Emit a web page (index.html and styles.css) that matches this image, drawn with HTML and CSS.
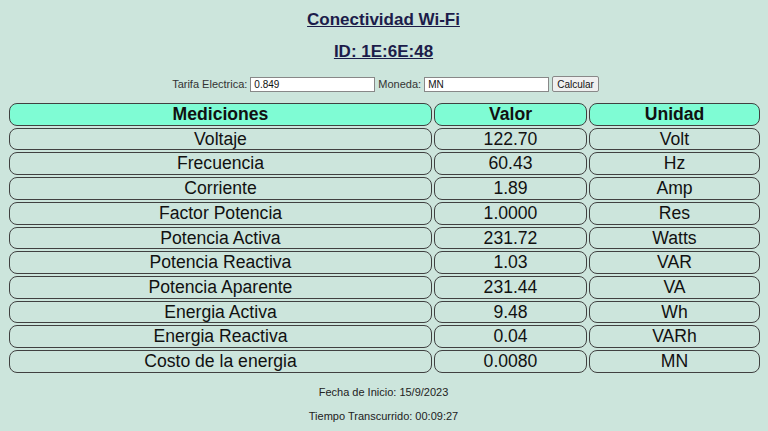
FILE: index.html
```html
<!DOCTYPE html>
<html lang="es">
<head>
<meta charset="utf-8">
<title>Conectividad Wi-Fi</title>
<link rel="stylesheet" href="styles.css">
</head>
<body>
<h1 class="title">Conectividad Wi-Fi</h1>
<h2 class="title">ID: 1E:6E:48</h2>
<div class="form">
  <label>Tarifa Electrica: <input class="field" type="text" value="0.849"></label>
  <label>Moneda: <input class="field" type="text" value="MN"></label>
  <button class="btn">Calcular</button>
</div>
<table class="data">
  <colgroup><col class="c1"><col class="c2"><col class="c3"></colgroup>
  <thead>
    <tr><th>Mediciones</th><th>Valor</th><th>Unidad</th></tr>
  </thead>
  <tbody>
    <tr><td>Voltaje</td><td>122.70</td><td>Volt</td></tr>
    <tr><td>Frecuencia</td><td>60.43</td><td>Hz</td></tr>
    <tr><td>Corriente</td><td>1.89</td><td>Amp</td></tr>
    <tr><td>Factor Potencia</td><td>1.0000</td><td>Res</td></tr>
    <tr><td>Potencia Activa</td><td>231.72</td><td>Watts</td></tr>
    <tr><td>Potencia Reactiva</td><td>1.03</td><td>VAR</td></tr>
    <tr><td>Potencia Aparente</td><td>231.44</td><td>VA</td></tr>
    <tr><td>Energia Activa</td><td>9.48</td><td>Wh</td></tr>
    <tr><td>Energia Reactiva</td><td>0.04</td><td>VARh</td></tr>
    <tr><td>Costo de la energia</td><td>0.0080</td><td>MN</td></tr>
  </tbody>
</table>
<p class="foot">Fecha de Inicio: 15/9/2023</p>
<p class="foot">Tiempo Transcurrido: 00:09:27</p>
</body>
</html>
```
FILE: styles.css
```css
html, body {
  margin: 0;
  padding: 0;
}
body {
  background: #cce5dc;
  font-family: "Liberation Sans", Arial, sans-serif;
  color: #111;
  padding: 0 8px 0 7px;
  overflow: hidden;
}
.title {
  font-size: 17px;
  font-weight: bold;
  text-decoration: underline;
  text-align: center;
  color: #1c1c4a;
  margin: 0;
  line-height: 20px;
}
h1.title {
  padding-top: 10px;
}
h2.title {
  margin-top: 12px;
}
.form {
  display: flex;
  justify-content: center;
  align-items: center;
  gap: 3px;
  font-size: 11px;
  color: #333;
  margin-top: 14px;
  height: 16px;
  padding-left: 4px;
}
.form label {
  display: flex;
  align-items: center;
  gap: 3px;
}
.field {
  width: 125px;
  height: 15px;
  box-sizing: border-box;
  border: 1px solid #888;
  padding: 0 3px;
  font-family: "Liberation Sans", Arial, sans-serif;
  font-size: 10px;
  background: #fff;
  color: #111;
}
.btn {
  height: 16px;
  box-sizing: border-box;
  padding: 0 4px;
  font-family: "Liberation Sans", Arial, sans-serif;
  font-size: 10px;
  border: 1px solid #888;
  background: #efefef;
  color: #111;
  border-radius: 2px;
}
.data {
  width: 755px;
  margin-top: 9px;
  border-collapse: separate;
  border-spacing: 2px;
  table-layout: fixed;
}
.c1 { width: 423px; }
.c2 { width: 153px; }
.c3 { width: 171px; }
.data th, .data td {
  border: 1px solid #404040;
  border-radius: 8px;
  height: 19.7px;
  padding: 1px 0 0;
  font-size: 17.6px;
  text-align: center;
  line-height: 19.7px;
  color: #111;
}
.data th {
  background: #7ffcd4;
  font-weight: bold;
}
.foot {
  text-align: center;
  font-size: 11px;
  line-height: 13px;
  color: #222;
  margin: 0;
}
.data + .foot {
  margin-top: 11px;
}
.foot + .foot {
  margin-top: 11px;
}
```
